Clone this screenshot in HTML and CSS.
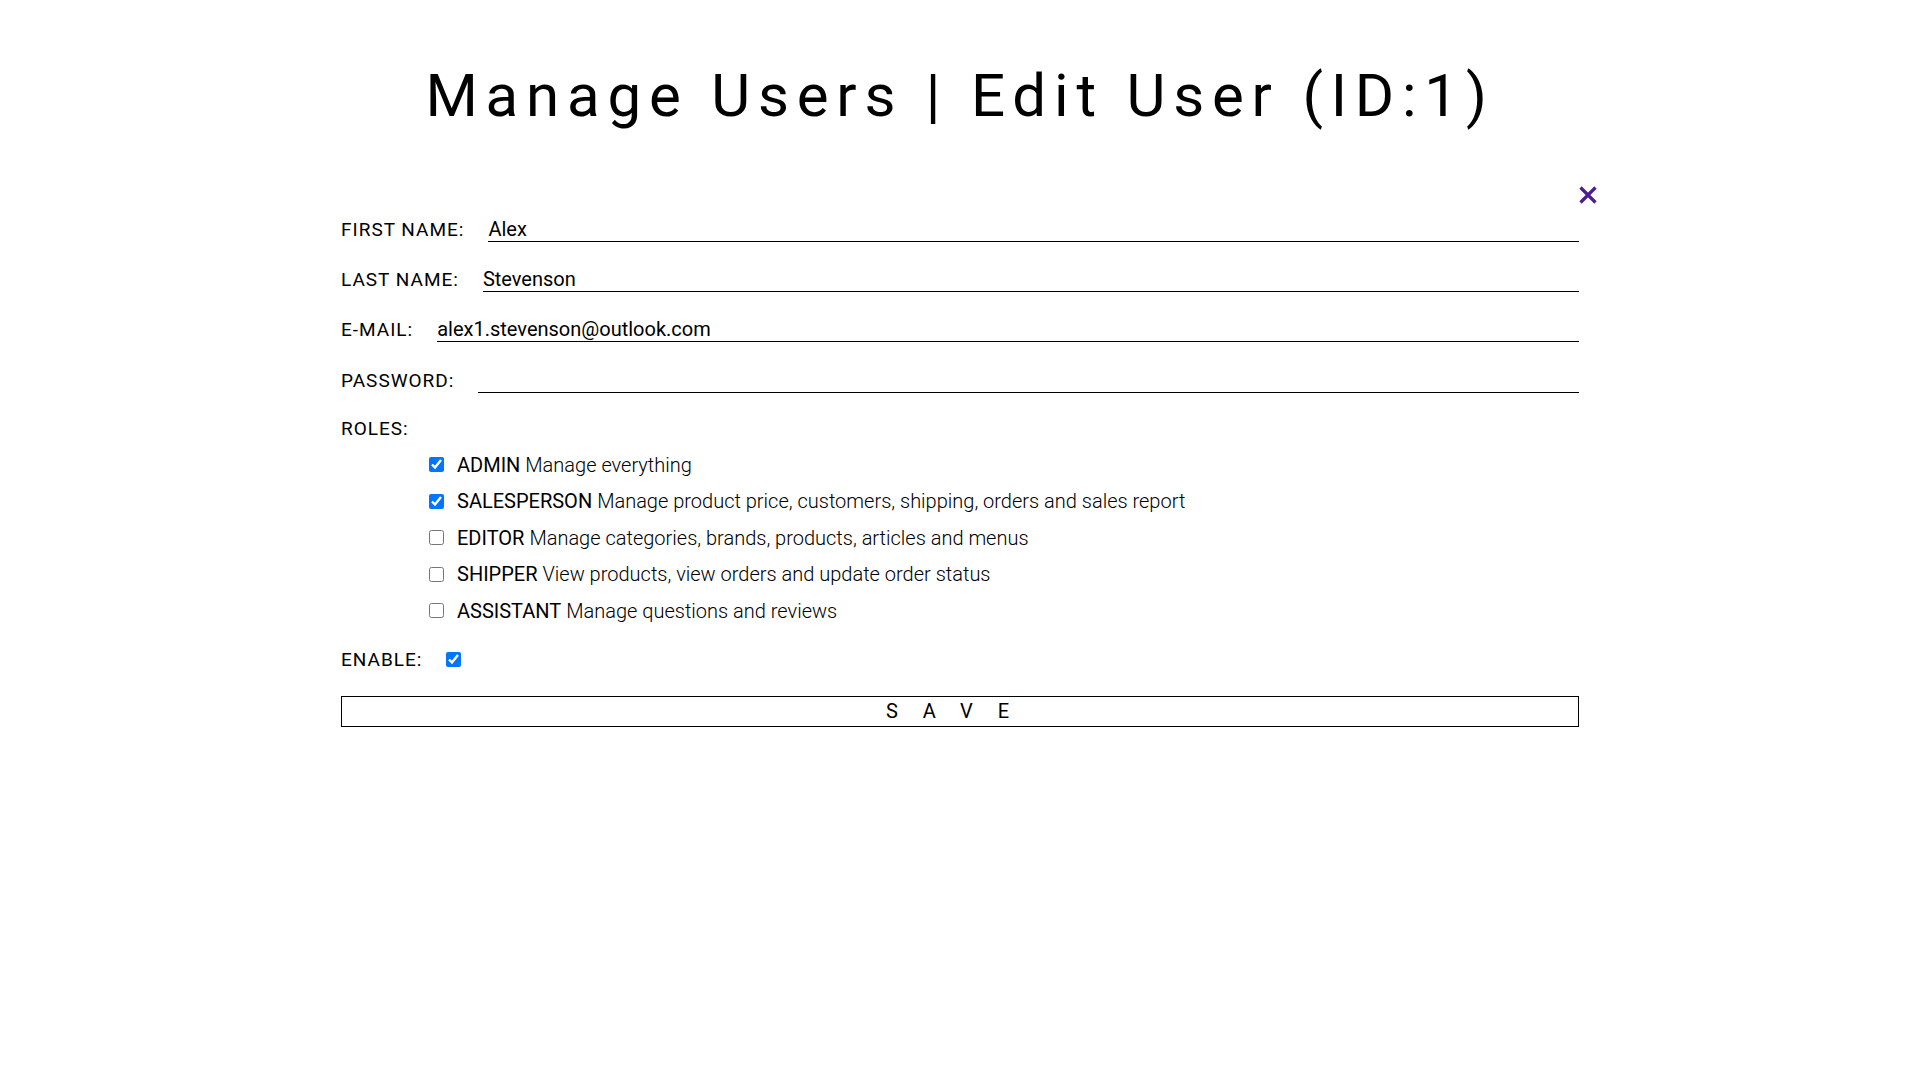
FILE: index.html
```html
<!DOCTYPE html>
<html lang="en">
<head>
<meta charset="utf-8">
<title>Manage Users | Edit User</title>
<link rel="stylesheet" href="styles.css">
</head>
<body>
<h1 class="title">Manage Users | Edit User (ID:1)</h1>
<form class="user-form">
  <a class="close-btn" href="#" aria-label="Close">
    <svg viewBox="0 0 20 20" width="20" height="20"><path d="M2.5 2.5 L17.5 17.5 M17.5 2.5 L2.5 17.5" stroke="#4b1f8f" stroke-width="3.2" stroke-linecap="butt" fill="none"/></svg>
  </a>
  <div class="field">
    <label class="label">FIRST NAME:</label>
    <input class="text-input" type="text" value="Alex">
  </div>
  <div class="field">
    <label class="label">LAST NAME:</label>
    <input class="text-input" type="text" value="Stevenson">
  </div>
  <div class="field">
    <label class="label">E-MAIL:</label>
    <input class="text-input" type="email" value="alex1.stevenson@outlook.com">
  </div>
  <div class="field">
    <label class="label">PASSWORD:</label>
    <input class="text-input" type="password" value="">
  </div>
  <div class="roles">
    <div class="label">ROLES:</div>
    <div class="role-list">
      <label class="role"><input class="check" type="checkbox" checked><span class="role-name">ADMIN</span>&nbsp;<span class="role-desc">Manage everything</span></label>
      <label class="role"><input class="check" type="checkbox" checked><span class="role-name">SALESPERSON</span>&nbsp;<span class="role-desc">Manage product price, customers, shipping, orders and sales report</span></label>
      <label class="role"><input class="check" type="checkbox"><span class="role-name">EDITOR</span>&nbsp;<span class="role-desc">Manage categories, brands, products, articles and menus</span></label>
      <label class="role"><input class="check" type="checkbox"><span class="role-name">SHIPPER</span>&nbsp;<span class="role-desc">View products, view orders and update order status</span></label>
      <label class="role"><input class="check" type="checkbox"><span class="role-name">ASSISTANT</span>&nbsp;<span class="role-desc">Manage questions and reviews</span></label>
    </div>
  </div>
  <div class="field enable">
    <label class="label">ENABLE:</label>
    <input class="check" type="checkbox" checked>
  </div>
  <button class="save-btn" type="button">SAVE</button>
</form>
</body>
</html>
```
FILE: styles.css
```css
html, body {
  margin: 0;
  padding: 0;
  background: #fff;
}

body {
  font-family: Roboto, "Liberation Sans", Arial, sans-serif;
  color: #000;
}

.title {
  margin: 61px 0 0 0;
  text-align: center;
  font-size: 60px;
  font-weight: 400;
  letter-spacing: 7.8px;
  line-height: 70px;
}

.user-form {
  position: relative;
  width: 1238px;
  margin: 86px auto 0 auto;
  display: flex;
  flex-direction: column;
}

.close-btn {
  position: absolute;
  right: -19px;
  top: -32px;
  display: block;
  width: 20px;
  height: 20px;
}

.close-btn svg {
  display: block;
}

.field {
  display: flex;
  align-items: baseline;
  margin-bottom: 25.2px;
}

.label {
  font-size: 19px;
  letter-spacing: 1px;
  line-height: 22px;
  margin-right: 24px;
  white-space: nowrap;
}

.text-input {
  flex: 1;
  min-width: 0;
  border: none;
  border-bottom: 1px solid #000;
  outline: none;
  padding: 0;
  margin: 0;
  font-family: Roboto, "Liberation Sans", Arial, sans-serif;
  font-size: 20px;
  line-height: 23px;
  height: 24px;
  color: #000;
  background: transparent;
}

.roles {
  margin-bottom: 19.8px;
}

.role-list {
  margin-top: 7px;
  padding-left: 88px;
  display: flex;
  flex-direction: column;
}

.role {
  display: flex;
  align-items: center;
  height: 36.4px;
  font-size: 20px;
}

.check {
  width: 15px;
  height: 15px;
  margin: 0;
  flex: none;
}

.role .check {
  margin-right: 13px;
}

.role-name {
  font-weight: 400;
}

.role-desc {
  font-weight: 300;
}

.enable {
  align-items: center;
  margin-bottom: 25px;
}

.save-btn {
  display: block;
  width: 100%;
  height: 31px;
  padding: 0;
  margin: 0;
  border: 1px solid #000;
  background: #fff;
  color: #000;
  font-family: Roboto, "Liberation Sans", Arial, sans-serif;
  font-size: 20px;
  letter-spacing: 25px;
  line-height: 29px;
  cursor: pointer;
}
```
